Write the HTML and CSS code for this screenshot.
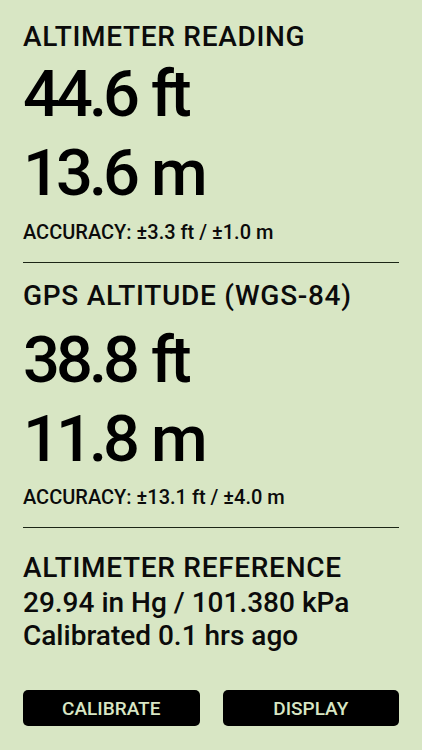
FILE: index.html
```html
<!DOCTYPE html>
<html lang="en">
<head>
  <meta charset="UTF-8">
  <meta name="viewport" content="width=device-width, initial-scale=1.0">
  <title>Altimeter</title>
  <link rel="stylesheet" href="styles.css">
</head>
<body>
  <div class="screen">
    <!-- Barometric reading -->
    <div class="section baro">
      <div class="title">ALTIMETER READING</div>
      <div class="big">44.6 ft</div>
      <div class="big">13.6 m</div>
      <div class="accuracy">ACCURACY: ±3.3 ft / ±1.0 m</div>
    </div>
    <hr class="rule">

    <!-- GPS -->
    <div class="section gps">
      <div class="title">GPS ALTITUDE (WGS-84)</div>
      <div class="big">38.8 ft</div>
      <div class="big">11.8 m</div>
      <div class="accuracy">ACCURACY: ±13.1 ft / ±4.0 m</div>
    </div>
    <hr class="rule">

    <!-- Reference -->
    <div class="section ref">
      <div class="title">ALTIMETER REFERENCE</div>
      <div class="line">29.94 in Hg / 101.380 kPa</div>
      <div class="line">Calibrated 0.1 hrs ago</div>
    </div>

    <div class="buttons">
      <button class="btn">CALIBRATE</button>
      <button class="btn">DISPLAY</button>
    </div>
  </div>
</body>
</html>
```

FILE: styles.css
```css
body {
  margin: 0;
  background-color: #d8e6c4;
  color: #0b0b0b;
  font-family: Roboto, "Liberation Sans", sans-serif;
  font-weight: 500;
}
.screen {
  padding: 19px 23px 0 23px;
}
.title {
  font-size: 28px;
  line-height: 36px;
  letter-spacing: 0.7px;
}
.big {
  font-size: 65px;
  line-height: 79px;
  letter-spacing: -4px;
  word-spacing: 3px;
  color: #000;
}
.accuracy {
  font-size: 20px;
  line-height: 26px;
  margin-top: 6px;
}
.gps .title {
  margin-bottom: 7px;
}
.gps .accuracy {
  margin-top: 5px;
}
.rule {
  border: none;
  border-top: 1px solid #1c2616;
  margin: 17px 0 15px 0;
}
.ref {
  margin-top: 22px;
}
.line {
  font-size: 28px;
  line-height: 33px;
}
.buttons {
  display: flex;
  gap: 23px;
  margin-top: 38px;
}
.btn {
  flex: 1;
  height: 36px;
  padding: 0;
  background-color: #000;
  color: #d8e6c4;
  border: none;
  border-radius: 5px;
  font-family: inherit;
  font-weight: 500;
  font-size: 19px;
}
```
